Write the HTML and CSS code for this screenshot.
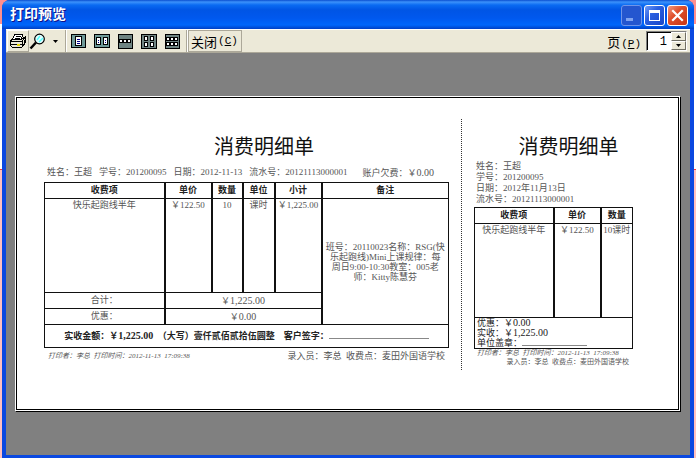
FILE: index.html
```html
<!DOCTYPE html>
<html lang="zh-CN">
<head>
  <meta charset="UTF-8">
  <meta name="viewport" content="width=device-width, initial-scale=1.0">
  <title>打印预览</title>
  <link rel="stylesheet" href="styles.css">
</head>
<body>
  <div class="window">
    <header class="titlebar">
      <h1>打印预览</h1>
      <button class="win-btn minimize" aria-label="最小化" disabled>
        <svg width="19" height="19" viewBox="0 0 19 19"><path d="M4 12h7v3H4z" fill="#7fa3f0"/></svg>
      </button>
      <button class="win-btn" aria-label="最大化">
        <svg width="19" height="19" viewBox="0 0 19 19"><path d="M4 4h11v11H4zM5 7v7h9V7z" fill="#fff" fill-rule="evenodd"/></svg>
      </button>
      <button class="win-btn close" aria-label="关闭">
        <svg width="19" height="19" viewBox="0 0 19 19"><path d="M5 5l9 9M14 5l-9 9" stroke="#fff" stroke-width="2.2" stroke-linecap="square"/></svg>
      </button>
    </header>

    <div class="toolbar">
      <button class="tool raised" aria-label="打印">
        <svg width="18" height="16" viewBox="0 0 18 16" shape-rendering="crispEdges">
          <path d="M6 1h8l-2 6H3z" fill="#fff" stroke="#000"/>
          <path d="M7 3h5M6 5h5" stroke="#000"/>
          <path d="M1 8l3-2h9l3-2v6l-3 4H3l-2-2z" fill="#ece9d8" stroke="#000"/>
          <path d="M1 8h12v5M13 8l3-3M2 11h11M15 7v5" fill="none" stroke="#000"/>
          <path d="M8 12h3" stroke="#e8d800" stroke-width="2"/>
        </svg>
      </button>
      <button class="tool" aria-label="缩放">
        <svg width="17" height="17" viewBox="0 0 17 17">
          <path d="M1.500 15.500L7 9.500" stroke="#000" stroke-width="2.500"/>
          <circle cx="10.500" cy="6" r="4.800" fill="#e4ffff" stroke="#000" stroke-width="1.200"/>
          <path d="M8 7l3-4M10 9l4-4" stroke="#5ff" stroke-width="1.400"/>
        </svg>
      </button>
      <button class="tool arrow" aria-label="缩放比例">
        <svg width="5" height="3" viewBox="0 0 5 3"><path d="M0 0h5L2.500 3z"/></svg>
      </button>
      <span class="separator"></span>
      <div class="layouts">
        <button class="tool" aria-label="单页">
          <svg width="15" height="15" viewBox="0 0 15 15" shape-rendering="crispEdges">
            <rect x=".5" y=".5" width="14" height="13" rx="1" fill="#6f9a98" stroke="#000"/>
            <path d="M4.500 2.500h6v9h-6z" fill="#fff" stroke="#000"/>
            <path d="M6 5.500h3M6 7.500h3M6 9.500h3" stroke="#008"/>
          </svg>
        </button>
        <button class="tool" aria-label="双页">
          <svg width="16" height="15" viewBox="0 0 16 15" shape-rendering="crispEdges">
            <rect x=".5" y=".5" width="15" height="13" rx="1" fill="#6f9a98" stroke="#000"/>
            <path d="M2.500 3.500h4v7h-4zM9.500 3.500h4v7h-4z" fill="#fff" stroke="#000"/>
            <path d="M4 6.500h1M4 8.500h1M11 6.500h1M11 8.500h1" stroke="#008"/>
          </svg>
        </button>
        <button class="tool" aria-label="三页">
          <svg width="15" height="15" viewBox="0 0 15 15" shape-rendering="crispEdges">
            <rect x=".5" y=".5" width="14" height="14" rx="1" fill="#6f8482" stroke="#000"/>
            <path d="M1.500 5.500h3v3h-3zM5.500 5.500h3v3h-3zM9.500 5.500h3v3h-3z" fill="#fff" stroke="#000"/>
          </svg>
        </button>
        <button class="tool" aria-label="四页">
          <svg width="16" height="15" viewBox="0 0 16 15" shape-rendering="crispEdges">
            <rect x=".5" y=".5" width="15" height="14" rx="1" fill="#6f8482" stroke="#000"/>
            <path d="M3.500 2.500h3v4h-3zM9.500 2.500h3v4h-3zM3.500 8.500h3v4h-3zM9.500 8.500h3v4h-3z" fill="#fff" stroke="#000"/>
          </svg>
        </button>
        <button class="tool" aria-label="六页">
          <svg width="15" height="15" viewBox="0 0 15 15" shape-rendering="crispEdges">
            <rect x=".5" y=".5" width="14" height="14" rx="1" fill="#6f8482" stroke="#000"/>
            <path d="M1.500 3.500h3v3h-3zM5.500 3.500h3v3h-3zM9.500 3.500h3v3h-3zM1.500 8.500h3v3h-3zM5.500 8.500h3v3h-3zM9.500 8.500h3v3h-3z" fill="#fff" stroke="#000"/>
          </svg>
        </button>
      </div>
      <span class="separator"></span>
      <button class="tool raised text">关闭<span class="key">(<u>C</u>)</span></button>
      <label class="page-label" for="page">页<span class="key">(<u>P</u>)</span></label>
      <div class="spinner">
        <input type="text" id="page" value="1">
        <div class="steps">
          <button aria-label="下一页"><svg width="5" height="3" viewBox="0 0 5 3"><path d="M0 3h5L2.500 0z"/></svg></button>
          <button aria-label="上一页"><svg width="5" height="3" viewBox="0 0 5 3"><path d="M0 0h5L2.500 3z"/></svg></button>
        </div>
      </div>
    </div>

    <main class="preview">
      <div class="paper">
        <div class="sheet">
          <section class="receipt">
            <h2>消费明细单</h2>
            <p class="info">
              <span>姓名：王超</span>
              <span>学号：201200095</span>
              <span>日期：2012-11-13</span>
              <span>流水号：20121113000001</span>
              <span class="debt">账户欠费：￥<span class="amount">0.00</span></span>
            </p>
            <table class="items">
              <colgroup>
                <col class="c-item"><col class="c-price"><col class="c-qty"><col class="c-unit"><col class="c-sum"><col class="c-note">
              </colgroup>
              <tr class="head">
                <th>收费项</th><th>单价</th><th>数量</th><th>单位</th><th>小计</th><th>备注</th>
              </tr>
              <tr class="body">
                <td>快乐起跑线半年</td>
                <td>￥122.50</td>
                <td>10</td>
                <td>课时</td>
                <td>￥1,225.00</td>
                <td class="note" rowspan="3">班号：20110023名称：RSG(快<br>乐起跑线)Mini上课规律：每<br>周日9:00-10:30教室：005老<br>师：Kitty陈慧芬</td>
              </tr>
              <tr class="sum">
                <td>合计：</td>
                <td colspan="4">￥<span class="amount">1,225.00</span></td>
              </tr>
              <tr class="sum">
                <td>优惠：</td>
                <td colspan="4">￥<span class="amount">0.00</span></td>
              </tr>
              <tr class="paid">
                <td colspan="6">实收金额：￥<span class="amount">1,225.00</span>&nbsp; （大写）壹仟贰佰贰拾伍圆整 &nbsp;&nbsp; 客户签字：<span class="line"></span></td>
              </tr>
            </table>
            <div class="footer">
              <p class="printed">打印者：李总&nbsp; 打印时间：2012-11-13&nbsp; 17:09:38</p>
              <p class="clerk">录入员：李总&nbsp; 收费点：麦田外国语学校</p>
            </div>
          </section>

          <section class="stub">
            <h2>消费明细单</h2>
            <p class="info">姓名：王超<br>学号：201200095<br>日期：2012年11月13日<br>流水号：20121113000001</p>
            <table class="items">
              <colgroup>
                <col class="s-item"><col class="s-price"><col class="s-qty">
              </colgroup>
              <tr class="head">
                <th>收费项</th><th>单价</th><th>数量</th>
              </tr>
              <tr class="body">
                <td>快乐起跑线半年</td>
                <td>￥122.50</td>
                <td>10课时</td>
              </tr>
              <tr class="stamp">
                <td colspan="3">优惠：￥<span class="amount">0.00</span><br>实收：￥<span class="amount">1,225.00</span><br>单位盖章：<span class="line"></span></td>
              </tr>
            </table>
            <p class="printed">打印者：李总&nbsp; 打印时间：2012-11-13&nbsp; 17:09:38</p>
            <p class="clerk">录入员：李总&nbsp; 收费点：麦田外国语学校</p>
          </section>
        </div>
      </div>
    </main>
  </div>
</body>
</html>
```

FILE: styles.css
```css
* {
  box-sizing: border-box;
}
body {
  margin: 0;
  padding: 0 2px;
  font-family: "Liberation Serif", "Noto Sans CJK SC", sans-serif;
  background: linear-gradient(#ff8f8f 0 24px, #fff 24px 169px, #f33 169px 170px, #ffc0c0 170px);
}
h1, h2, p {
  margin: 0;
}
button {
  padding: 0;
  font: inherit;
}
svg {
  display: block;
}
.window {
  display: flex;
  flex-direction: column;
  min-height: 100vh;
  border: solid #0a48e0;
  border-width: 0 4px 3px;
  border-radius: 8px 8px 0 0;
  background: #0a48e0;
}

/* title bar */
.titlebar {
  display: flex;
  align-items: center;
  gap: 2px;
  height: 29px;
  margin: 0 -4px;
  padding: 1px 6px 0 8px;
  border-radius: 8px 8px 0 0;
  background: linear-gradient(#0a4fd0 0, #3c92fb 2px, #0a6bf2 5px, #0055e5 10px, #0058ee 18px, #0066fb 25px, #003fc4 29px);
}
.titlebar h1 {
  flex: 1;
  color: #fff;
  font-size: 14px;
  line-height: 20px;
  text-shadow: 1px 1px #0f1089;
}
.win-btn {
  width: 21px;
  height: 21px;
  border: 1px solid #fff;
  border-radius: 3px;
  background: linear-gradient(135deg, #6f9bf7, #2a5fe0 40%, #1846c8);
}
.win-btn.minimize {
  border-color: #6f94e8;
  background: #2456cf;
}
.win-btn.close {
  background: linear-gradient(135deg, #f09a80, #e0502c 40%, #c83414);
}

/* toolbar */
.toolbar {
  display: flex;
  align-items: center;
  height: 24px;
  padding: 0 3px 0 1px;
  border-top: 1px solid #fff;
  border-bottom: 1px solid #aca899;
  background: #ece9d8;
  font-size: 13px;
}
.tool {
  display: flex;
  align-items: center;
  justify-content: center;
  height: 22px;
  border: 0;
  background: none;
}
.tool.raised {
  padding: 0 1px;
  border: 1px solid;
  border-color: #fff #aca899 #aca899 #fff;
}
.tool.text {
  padding: 0 3px 0 2px;
  border-color: #aca899;
}
.arrow {
  width: 19px;
}
.separator {
  width: 2px;
  height: 22px;
  border-left: 1px solid #aca899;
  background: #fff;
}
.layouts {
  display: flex;
  gap: 8px;
  padding: 0 6px 0 4px;
}
.key {
  margin-left: 1px;
  font-family: "Liberation Mono", monospace;
  font-size: 11px;
}
.page-label {
  margin-left: auto;
  margin-right: 5px;
}
.spinner {
  display: flex;
  width: 41px;
  height: 20px;
  border: 1px solid;
  border-color: #808080 #fff #fff #808080;
  background: #fff;
}
.spinner input {
  flex: 1;
  min-width: 0;
  padding: 0 4px 0 0;
  border: 0;
  border-left: 1px solid #000;
  border-top: 1px solid #000;
  font: 12px "Liberation Mono", monospace;
  text-align: right;
}
.steps {
  display: flex;
  flex-direction: column;
  width: 15px;
}
.steps button {
  display: flex;
  flex: 1;
  align-items: center;
  justify-content: center;
  border: 1px solid;
  border-color: #fff #716f64 #716f64 #fff;
  background: #ece9d8;
}

/* preview area */
.preview {
  display: flex;
  flex: 1;
  padding: 43px 11px 44px 9px;
  background: #808080;
}
.paper {
  display: flex;
  flex: 1;
  border: 1px solid #fff;
  box-shadow: 1px 1px #000;
}
.sheet {
  display: grid;
  flex: 1;
  grid-template-columns: 418fr 170fr;
  align-items: start;
  padding: 21px 45px 39px 27px;
  border: 1px solid #000;
  background: #fff;
  color: #555;
  font-size: 9px;
  line-height: 11px;
}
.amount {
  font-size: 10px;
}
.receipt {
  height: 251px;
  padding-right: 12px;
  border-right: 1px dotted #333;
}
.stub {
  padding-left: 12px;
}
h2 {
  padding: 14px 0 0 35px;
  color: #111;
  font-size: 20px;
  font-weight: normal;
  line-height: 28px;
  text-align: center;
  white-space: nowrap;
}
.stub h2 {
  padding-left: 30px;
}
.info {
  padding: 6px 3px 3px;
  white-space: nowrap;
}
.receipt .info {
  display: flex;
  gap: 7px;
}
.debt {
  margin-left: 8px;
}
.stub .info {
  padding: 0 2px 2px;
}

/* receipt tables */
.items {
  width: 100%;
  border-collapse: collapse;
  table-layout: fixed;
}
.items th,
.items td {
  padding: 0;
  border: 1px solid #111;
  text-align: center;
  white-space: nowrap;
}
.c-item { width: 120px; }
.c-price { width: 47px; }
.c-qty { width: 31px; }
.c-unit { width: 32px; }
.c-sum { width: 47px; }
.c-note { width: 127px; }
.s-item { width: 79px; }
.s-price { width: 47px; }
.s-qty { width: 32px; }
.head {
  height: 16px;
  color: #222;
}
.body {
  height: 94px;
  vertical-align: top;
}
.items .body td {
  padding-top: 1px;
}
.items th + th,
.items td + td {
  border-left-width: 2px;
}
.items .body .note {
  vertical-align: middle;
  line-height: 10px;
}
.sum {
  height: 16px;
}
.paid {
  height: 23px;
  color: #222;
  font-weight: bold;
}
.line {
  display: inline-block;
  width: 100px;
  border-bottom: 1px solid #888;
}
.footer {
  display: flex;
  justify-content: space-between;
  padding: 3px 4px 0;
}
.printed {
  font-size: 7px;
  font-style: italic;
}
.items .stamp td {
  padding-left: 2px;
  color: #222;
  line-height: 10px;
  text-align: left;
}
.stamp .line {
  width: 65px;
}
.stub .printed {
  padding-left: 3px;
  line-height: 9px;
}
.stub .clerk {
  padding-right: 4px;
  font-size: 7px;
  line-height: 9px;
  text-align: right;
}
```
